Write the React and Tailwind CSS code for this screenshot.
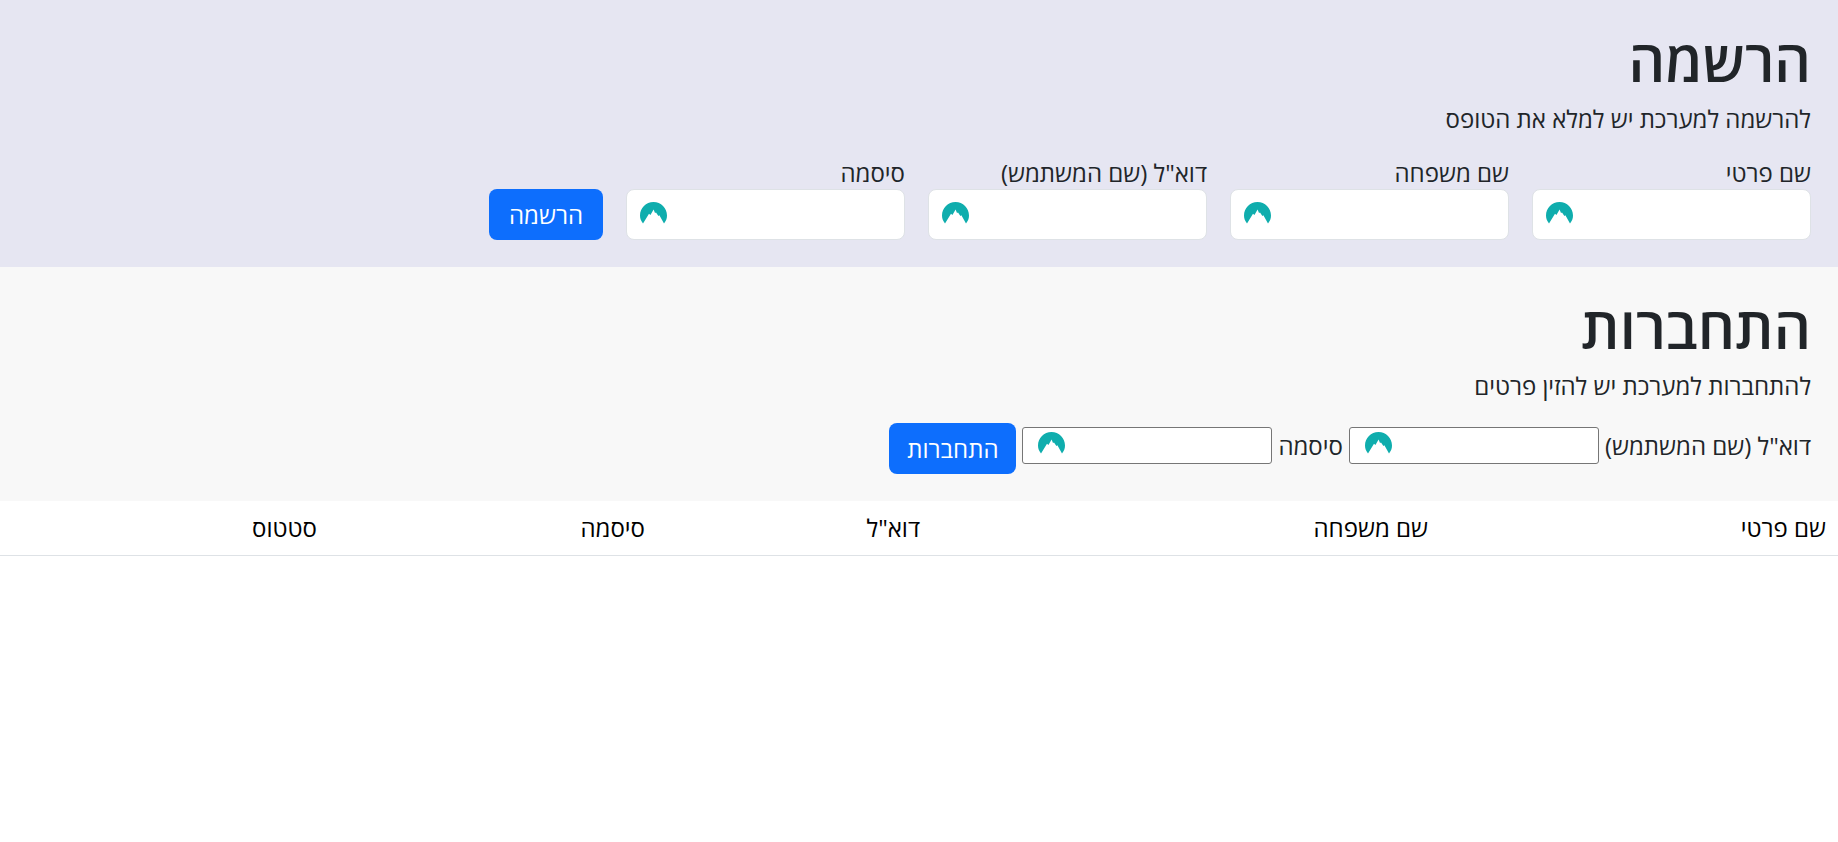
const font = { fontFamily: '"Open Sans", "Liberation Sans", Arial, sans-serif' };

function NordIcon({ className }) {
  return (
    <svg className={className} width="27" height="22" viewBox="0 0 27 22">
      <path
        fill="#0fadad"
        d="M3 21.5C1 19.2 0 16.6 0 13.6 0 6.1 6 0 13.5 0S27 6.1 27 13.6c0 3-1 5.6-3 7.9L19.4 13.2 18.4 14 16 10.6 15 11 13.6 7.6 11.6 11 10.4 13 9 11.8z"
      />
    </svg>
  );
}

function Field({ label, type = "text" }) {
  return (
    <div className="w-[279px]">
      <label className="block text-[24px] leading-[33px] text-[#212529] text-right">{label}</label>
      <div className="relative h-[51px] bg-white rounded-lg border border-[#dee2e6]">
        <NordIcon className="absolute left-[13px] top-[12px]" />
        <input type={type} className="w-full h-full bg-transparent outline-none px-4" />
      </div>
    </div>
  );
}

function InlineInput({ type = "text" }) {
  return (
    <div className="relative w-[250px] h-[37px] mb-[7px] bg-white rounded-[3px] border border-[#767676]">
      <NordIcon className="absolute left-[15px] top-[4px]" />
      <input type={type} className="w-full h-full bg-transparent outline-none" />
    </div>
  );
}

const headers = [
  ["שם פרטי", "w-[398px]"],
  ["שם משפחה", "w-[508px]"],
  ['דוא"ל', "w-[275px]"],
  ["סיסמה", "w-[328px]"],
  ["סטטוס", "w-[329px]"],
];

export default function App() {
  return (
    <div dir="rtl" style={font} className="min-h-[842px] bg-white">
      <section className="h-[267px] bg-[#e6e6f2] pt-[27px] pr-[27px] pl-[28px]">
        <h1 className="text-[57px] leading-[67px] font-semibold text-[#212529]">הרשמה</h1>
        <p className="mt-[8px] text-[24px] leading-[33px] text-[#212529]">להרשמה למערכת יש למלא את הטופס</p>
        <form className="mt-[21px] flex items-end gap-[23px]" onSubmit={(e) => e.preventDefault()}>
          <Field label="שם פרטי" />
          <Field label="שם משפחה" />
          <Field label='דוא"ל (שם המשתמש)' />
          <Field label="סיסמה" type="password" />
          <button className="h-[51px] w-[114px] bg-[#0d6efd] text-white text-[24px] rounded-lg">הרשמה</button>
        </form>
      </section>

      <section className="h-[234px] bg-[#f8f8f8] pt-[26px] pr-[27px] pl-[28px]">
        <h1 className="text-[58px] leading-[67px] font-semibold text-[#212529]">התחברות</h1>
        <p className="mt-[9px] text-[24px] leading-[33px] text-[#212529]">להתחברות למערכת יש להזין פרטים</p>
        <form className="mt-[21px] flex items-center gap-[6px] text-[24px] text-[#212529]" onSubmit={(e) => e.preventDefault()}>
          <label className="mb-[6px]">דוא"ל (שם המשתמש)</label>
          <InlineInput />
          <label className="mb-[6px]">סיסמה</label>
          <InlineInput type="password" />
          <button className="h-[51px] w-[127px] bg-[#0d6efd] text-white rounded-lg">התחברות</button>
        </form>
      </section>

      <table className="w-full table-fixed">
        <thead>
          <tr className="border-b border-[#dee2e6]">
            {headers.map(([text, width]) => (
              <th key={text} className={`${width} h-[54px] px-[12px] text-right font-normal text-[24px] text-black`}>{text}</th>
            ))}
          </tr>
        </thead>
      </table>
    </div>
  );
}
